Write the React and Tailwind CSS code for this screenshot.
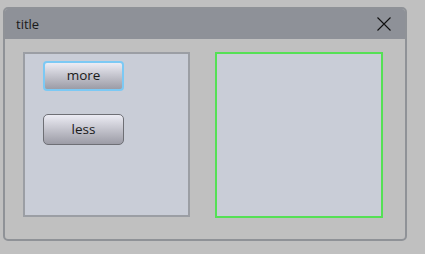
export default function App() {
  return (
    <div className="w-[425px] h-[254px] bg-[#c0c0c0] pt-[7px] pl-[3px] font-['Open_Sans','Noto_Sans',sans-serif] text-[13px] text-[#1a1a1a]">
      <div className="w-[404px] h-[234px] rounded-[5px] border-2 border-[#8f9297] bg-[#c0c0c0] flex flex-col overflow-hidden">
        <div className="h-[30px] bg-[#8e9198] flex items-center justify-between pl-[11px] pr-[13px]">
          <span className="leading-none">title</span>
          <svg width="14" height="14" viewBox="0 0 14 14" className="mr-px">
            <path d="M0.5 0.5 L13.5 13.5 M13.5 0.5 L0.5 13.5" stroke="#111" strokeWidth="1.1" fill="none" />
          </svg>
        </div>
        <div className="flex pt-[13px] pl-[18px] gap-[25px]">
          <div className="w-[167px] h-[165px] border-2 border-[#9b9ea4] bg-[#c9cdd7] flex flex-col items-start pl-[18px] pt-[7px] gap-[23px]">
            <button className="w-[81px] h-[30px] rounded-[4px] border-2 border-[#7cc9f4] bg-gradient-to-b from-[#ececf4] to-[#9c9ca6] leading-none text-[13.5px]">
              more
            </button>
            <button className="w-[81px] h-[31px] rounded-[5px] border border-[#6e6f75] bg-gradient-to-b from-[#ececf4] to-[#9c9ca6] leading-none text-[13.5px]">
              less
            </button>
          </div>
          <div className="w-[168px] h-[166px] border-2 border-[#55e055] bg-[#c9cdd7]" />
        </div>
      </div>
    </div>
  );
}
